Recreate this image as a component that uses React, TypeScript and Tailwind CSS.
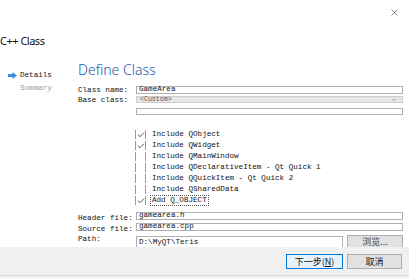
import { Check, ChevronDown, X } from "lucide-react";

const mono = "font-['Liberation_Mono','Noto_Sans_CJK_SC',monospace] text-[7.6px] text-[#111]";
const cjk = "font-['Noto_Sans_CJK_SC',sans-serif] text-[9px] text-[#111]";

const includes = [
  { label: "Include QObject", checked: true },
  { label: "Include QWidget", checked: true },
  { label: "Include QMainWindow", checked: false },
  { label: "Include QDeclarativeItem - Qt Quick 1", checked: false },
  { label: "Include QQuickItem - Qt Quick 2", checked: false },
  { label: "Include QSharedData", checked: false },
];

function Box({ children }: { children?: React.ReactNode }) {
  return (
    <div className="flex h-full flex-1 items-end overflow-visible border border-[#b0b0b0] bg-white pl-[2px]">
      <span className="leading-[8px]">{children}</span>
    </div>
  );
}

function FormRow({
  label,
  value,
  className,
  labelClass = "",
}: {
  label: string;
  value?: string;
  className: string;
  labelClass?: string;
}) {
  return (
    <div className={`flex shrink-0 items-center ${className}`}>
      <span className={`w-[58px] shrink-0 leading-[8px] ${labelClass}`}>{label}</span>
      <Box>{value}</Box>
    </div>
  );
}

function CheckRow({ label, checked, focus }: { label: string; checked: boolean; focus?: boolean }) {
  return (
    <div className="flex h-[11px] items-center">
      <div className="ml-[57px] flex h-[9px] w-[11px] items-center justify-center border-x border-[#9a9a9a]">
        {checked && <Check className="h-[8px] w-[8px] text-[#333]" strokeWidth={2.5} />}
      </div>
      <span
        className={`ml-[4px] leading-[9px] ${focus ? "border border-dotted border-[#555] px-[1px]" : "px-[2px]"}`}
      >
        {label}
      </span>
    </div>
  );
}

export default function App() {
  return (
    <div className="flex h-[278px] w-[409px] flex-col overflow-hidden bg-white">
      <div className="flex h-[247px] shrink-0 flex-col overflow-hidden">
        <div className="flex h-[24px] shrink-0 items-center justify-end pr-[9px]">
          <X className="h-[11px] w-[11px] text-[#333]" strokeWidth={1.2} />
        </div>
        <div className="h-[36px] shrink-0 pt-[10px] font-['Noto_Sans',sans-serif] text-[11px] leading-[14px] tracking-[-0.5px] text-[#111]">
          C++ Class
        </div>

        <div className="flex shrink-0">
          <div className={`w-[78px] shrink-0 pl-[8px] pt-[9px] ${mono}`}>
            <div className="flex h-[13px] items-center gap-[3px]">
              <svg width="9" height="7" viewBox="0 0 9 7" className="shrink-0">
                <polygon points="0,2 4.5,2 4.5,0 9,3.5 4.5,7 4.5,5 0,5" fill="#3f8fe0" />
              </svg>
              <span className="leading-[13px]">Details</span>
            </div>
            <div className="flex h-[13px] items-center pl-[12px] text-[#9a9a9a]">Summary</div>
          </div>

          <div className={`flex flex-1 flex-col pr-[6px] ${mono}`}>
            <div className="mt-[1px] h-[18px] shrink-0 font-['Noto_Sans',sans-serif] text-[14px] font-light leading-[18px] text-[#1f56ad]">
              Define Class
            </div>

            <FormRow label="Class name:" value="GameArea" className="mt-[7px] h-[8px]" />

            <div className="mt-[2px] flex h-[7px] shrink-0 items-center">
              <span className="w-[58px] shrink-0 leading-[8px]">Base class:</span>
              <div className="flex h-full flex-1 items-center justify-between border border-[#cdcdcd] bg-[#e6e6e6] pl-[3px] pr-[5px]">
                <span className="text-[6.6px] leading-[6px] text-[#555]">&lt;Custom&gt;</span>
                <ChevronDown className="h-[6px] w-[6px] text-[#666]" strokeWidth={2} />
              </div>
            </div>

            <div className="mt-[5px] flex h-[7px] shrink-0">
              <span className="w-[58px] shrink-0" />
              <Box />
            </div>

            <div className="mt-[14px] flex shrink-0 flex-col">
              {includes.map((i) => (
                <CheckRow key={i.label} label={i.label} checked={i.checked} />
              ))}
              <CheckRow label="Add Q_OBJECT" checked focus />
            </div>

            <FormRow
              label="Header file:"
              value="gamearea.h"
              className="mt-[6px] h-[8px]"
              labelClass="mt-[4px]"
            />
            <FormRow
              label="Source file:"
              value="gamearea.cpp"
              className="mt-[3px] h-[8px]"
              labelClass="mt-[4px]"
            />

            <div className="mt-[4px] flex h-[15px] shrink-0 items-start">
              <span className="w-[58px] shrink-0 leading-[8px]">Path:</span>
              <div className="mt-[1px] flex h-[12px] w-[207px] items-end border border-[#b0b0b0] pl-[2px]">
                <span className="leading-[10px]">D:\MyQT\Teris</span>
              </div>
              <div className={`ml-[4px] flex h-[15px] flex-1 items-start justify-center border border-[#adadad] bg-[#e1e1e1] pt-[1px] ${cjk}`}>
                <span className="leading-[10px] text-[#444]">浏览...</span>
              </div>
            </div>
          </div>
        </div>
      </div>

      <div className="flex h-[28px] shrink-0 items-start justify-end gap-[4px] bg-[#f0f0f0] pr-[7px] pt-[7px]">
        <div className={`flex h-[15px] w-[57px] items-center justify-center border border-[#0078d7] bg-[#e5f1fb] ${cjk}`}>
          下一步(<span className="underline">N</span>)
        </div>
        <div className={`flex h-[15px] w-[55px] items-center justify-center border border-[#adadad] bg-[#e1e1e1] ${cjk}`}>
          取消
        </div>
      </div>
      <div className="h-[1px] shrink-0 bg-[#d8d8d8]" />
      <div className="flex-1 bg-[#f0f0f0]" />
    </div>
  );
}
